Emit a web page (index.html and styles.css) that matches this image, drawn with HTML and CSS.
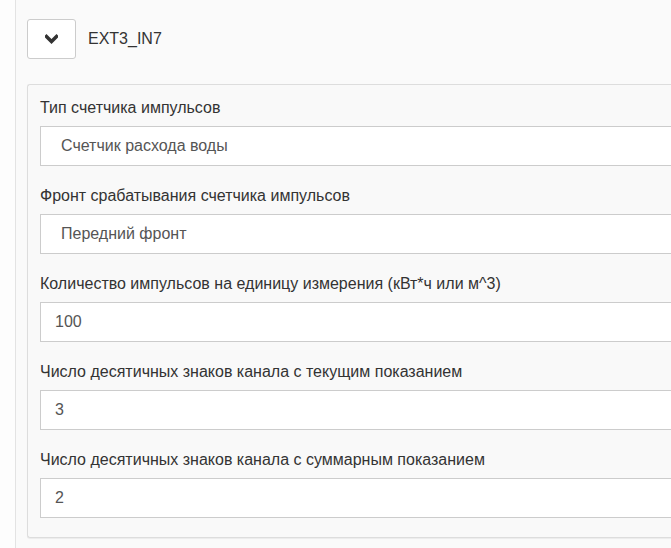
FILE: index.html
```html
<!DOCTYPE html>
<html lang="ru">
<head>
  <meta charset="UTF-8" />
  <meta name="viewport" content="width=device-width, initial-scale=1.0" />
  <title>EXT3_IN7</title>
  <link rel="stylesheet" href="styles.css">
</head>
<body>
  <div class="page">
    <div class="channel">
      <div class="channel-head">
        <button class="toggle" type="button">
          <svg width="13" height="10" viewBox="0 0 13 10">
            <path d="M1.5 2.5 L6.5 7.5 L11.5 2.5" fill="none" stroke="#333" stroke-width="3.4" stroke-linecap="square" />
          </svg>
        </button>
        <span class="channel-name">EXT3_IN7</span>
      </div>

      <div class="panel">
        <div class="field">
          <label>Тип счетчика импульсов</label>
          <div class="control select">Счетчик расхода воды</div>
        </div>
        <div class="field">
          <label>Фронт срабатывания счетчика импульсов</label>
          <div class="control select">Передний фронт</div>
        </div>
        <div class="field">
          <label>Количество импульсов на единицу измерения (кВт*ч или м^3)</label>
          <input class="control" type="text" value="100" />
        </div>
        <div class="field">
          <label>Число десятичных знаков канала с текущим показанием</label>
          <input class="control" type="text" value="3" />
        </div>
        <div class="field">
          <label>Число десятичных знаков канала с суммарным показанием</label>
          <input class="control" type="text" value="2" />
        </div>
      </div>
    </div>
  </div>
</body>
</html>
```

FILE: styles.css
```css
html, body {
  margin: 0;
  padding: 0;
  overflow: hidden;
}
body {
  font-family: "Liberation Sans", Arial, sans-serif;
  color: #333;
  background: #fdfdfd;
  height: 548px;
}
.page {
  margin-left: 15px;
  border-left: 1px solid #e3e3e3;
  background: #fafafa;
  height: 548px;
}
.channel {
  padding: 19px 0 0 11px;
}
.channel-head {
  display: flex;
  align-items: center;
  gap: 12px;
}
.toggle {
  width: 49px;
  height: 40px;
  padding: 0;
  border: 1px solid #ccc;
  border-radius: 3px;
  background: #fff;
  display: flex;
  align-items: center;
  justify-content: center;
}
.channel-name {
  font-size: 16px;
  color: #333;
}
/* panel continues past the right edge, so no right border */
.panel {
  margin-top: 25px;
  background: #f9f9f9;
  border: 1px solid #ddd;
  border-right: none;
  border-radius: 3px 0 0 3px;
  box-shadow: 0 1px 1px rgba(0, 0, 0, 0.06);
  padding: 13px 0 19px 12px;
}
.field {
  display: flex;
  flex-direction: column;
}
.field + .field {
  margin-top: 20px;
}
.field label {
  font-size: 16px;
  line-height: 20px;
  margin-bottom: 8px;
}
.control {
  box-sizing: border-box;
  height: 40px;
  width: 100%;
  border: 1px solid #ccc;
  border-right: none;
  background: #fff;
  font-family: inherit;
  font-size: 16px;
  color: #555;
  padding: 0 14px;
  margin: 0;
  outline: none;
}
.select {
  display: flex;
  align-items: center;
  padding-left: 20px;
}
```
